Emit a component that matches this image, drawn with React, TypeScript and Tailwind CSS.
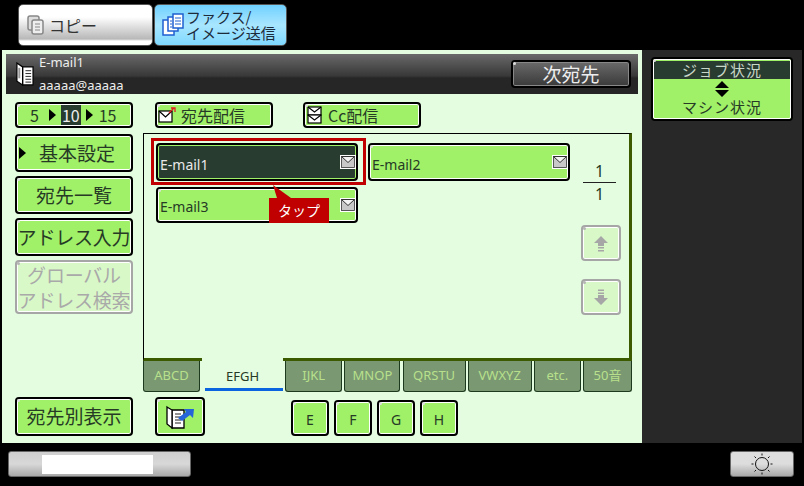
import type { ReactNode } from "react";

const font = "font-['Noto_Sans_CJK_JP','DejaVu_Sans',sans-serif]";
const latin = "font-['Noto_Sans','Noto_Sans_CJK_JP',sans-serif]";

function Dot({ muted }: { muted?: boolean }) {
  return (
    <span
      className={`absolute left-[0px] top-[0px] h-[3px] w-[3px] rounded-full ${muted ? "bg-[#b5b5b5]" : "bg-[#dddddd]"}`}
    />
  );
}

function GreenButton({ className, children }: { className: string; children: ReactNode }) {
  return (
    <div
      className={`relative flex shrink-0 items-center justify-center rounded-[4px] border-2 border-black bg-[#a0f068] text-[#263a26] shadow-[inset_0_0_0_1px_#ffffff] ${className}`}
    >
      <Dot />
      {children}
    </div>
  );
}

function DisabledButton({ className, children }: { className: string; children: ReactNode }) {
  return (
    <div
      className={`relative flex shrink-0 items-center justify-center rounded-[4px] border-2 border-[#a6a6a6] bg-[#d9f8c8] text-[#a9a9a9] shadow-[inset_0_0_0_1px_#ffffff] ${className}`}
    >
      <Dot muted />
      {children}
    </div>
  );
}

function Triangle({ className }: { className?: string }) {
  return (
    <svg width="7" height="12" viewBox="0 0 7 12" className={`shrink-0 ${className ?? ""}`}>
      <path d="M0 0 L7 6 L0 12 Z" fill="#000000" />
    </svg>
  );
}

function Envelope() {
  return (
    <svg width="16" height="14" viewBox="0 0 16 14" className="shrink-0">
      <rect x="0" y="0" width="16" height="14" fill="#ffffff" />
      <rect x="1.5" y="1.5" width="13" height="11" fill="#c8c8c8" stroke="#333333" strokeWidth="0.8" />
      <path d="M1.5 1.5 L8 7.5 L14.5 1.5 Z" fill="#f4f4f4" stroke="#333333" strokeWidth="1" />
    </svg>
  );
}

function BookIcon({ size = 20 }: { size?: number }) {
  return (
    <svg width={size} height={size + 6} viewBox="0 0 20 26" className="shrink-0">
      <path d="M8 5 H19 V24 H8 Z" fill="#ffffff" stroke="#000000" strokeWidth="1.3" />
      <path d="M2 1 L8 5 V24 L2 20 Z" fill="#ffffff" stroke="#000000" strokeWidth="1.3" />
      <path d="M11 9 H17 M11 12 H17 M11 15 H17 M11 18 H17 M11 21 H17" stroke="#222222" strokeWidth="1" />
      <path d="M4.5 6 V17" stroke="#9a9a9a" strokeWidth="2" />
    </svg>
  );
}

function MailTab({ dark, label }: { dark?: boolean; label: string }) {
  return (
    <div
      className={`relative flex h-[38px] w-[202px] shrink-0 justify-between rounded-[4px] border-2 pl-[2px] text-[14px] ${
        dark
          ? "border-black bg-[#283c30] text-[#e8e8e8] shadow-[inset_0_0_0_1px_#a0f068]"
          : "border-black bg-[#a0f068] text-[#263a26] shadow-[inset_0_0_0_1px_#ffffff]"
      }`}
    >
      {!dark && <Dot />}
      <span className={`pt-[10px] leading-[20px] ${latin}`}>{label}</span>
      <span className="pt-[10px]">
        <Envelope />
      </span>
    </div>
  );
}

const tabs = [
  { label: "ABCD", w: "w-[57px]" },
  { label: "EFGH", w: "w-[81px]", active: true },
  { label: "IJKL", w: "w-[57px]" },
  { label: "MNOP", w: "w-[56px]" },
  { label: "QRSTU", w: "w-[63px]" },
  { label: "VWXYZ", w: "w-[64px]" },
  { label: "etc.", w: "w-[47px]" },
  { label: "50音", w: "w-[49px]" },
];

export default function App() {
  return (
    <div className={`flex h-[486px] w-[804px] flex-col overflow-hidden bg-black ${font}`}>
      {/* top mode tabs */}
      <div className="flex h-[50px] shrink-0 pl-[18px] pt-[4px]">
        <div className="flex h-[42px] w-[135px] items-center rounded-[5px] border border-[#555555] bg-gradient-to-b from-[#ffffff] from-30% via-[#b8b8b8] via-85% to-[#ffffff] to-90% pl-[8px] text-[16px] text-[#333333]">
          <svg width="18" height="22" viewBox="0 0 18 22" className="shrink-0">
            <rect x="1" y="2" width="11" height="14" rx="2" fill="#dddddd" stroke="#888888" strokeWidth="1.5" />
            <rect x="5" y="6" width="11" height="14" rx="2" fill="#eeeeee" stroke="#888888" strokeWidth="1.5" />
            <path d="M8 10 H13 M8 13 H13 M8 16 H13" stroke="#888888" strokeWidth="1" />
          </svg>
          <span className="ml-[4px]">コピー</span>
        </div>
        <div className="ml-[1px] flex h-[42px] w-[133px] items-center rounded-[5px] border border-[#555555] bg-gradient-to-b from-[#6fd0ff] via-[#a8e6ff] to-[#7fd8ff] pl-[7px] text-[15px] leading-[16px] text-[#1c2a3a]">
          <svg width="22" height="24" viewBox="0 0 22 24" className="shrink-0">
            <rect x="1" y="7" width="11" height="15" fill="#ffffff" stroke="#1f5fd0" strokeWidth="1.5" />
            <rect x="6" y="4" width="10" height="14" fill="#ffffff" stroke="#1f5fd0" strokeWidth="1.5" />
            <rect x="11" y="1" width="10" height="14" fill="#ffffff" stroke="#1f5fd0" strokeWidth="1.5" />
            <path d="M13 5 H19 M13 8 H19 M13 11 H19 M8 8 H10 M8 11 H10 M8 14 H10" stroke="#1f5fd0" strokeWidth="1" />
          </svg>
          <div className="ml-[2px]">
            <div>ファクス/</div>
            <div>イメージ送信</div>
          </div>
        </div>
      </div>

      {/* main area */}
      <div className="ml-[2px] flex h-[393px] w-[800px] shrink-0">
        <div className="h-full w-[640px] shrink-0 bg-[#e4fde0] pt-[4px]">
          {/* destination header */}
          <div className="ml-[4px] flex h-[40px] w-[632px] items-center bg-gradient-to-b from-[#6a6a6a] from-0% via-[#383838] via-55% to-[#262626] to-60% pl-[9px] pr-[7px]">
            <BookIcon size={19} />
            <div className={`ml-[5px] flex-1 text-[13px] leading-[23px] text-[#eeeeee] ${latin}`}>
              <div>E-mail1</div>
              <div>aaaaa@aaaaa</div>
            </div>
            <div className="relative flex h-[28px] w-[120px] items-center justify-center rounded-[4px] border-2 border-black bg-gradient-to-b from-[#6a6a6a] to-[#3a3a3a] text-[19px] text-[#eeeeee] shadow-[inset_0_0_0_1px_#888888]">
              <Dot />
              次宛先
            </div>
          </div>

          {/* delivery options */}
          <div className="mt-[8px] flex pl-[13px] text-[16px]">
            <GreenButton className="h-[26px] w-[118px] justify-start pl-[13px] text-[16px]">
              <span>5</span>
              <Triangle className="ml-[10px]" />
              <span className="ml-[5px] bg-[#283c30] px-[1px] leading-[20px] text-[#eeeeee]">10</span>
              <Triangle className="ml-[5px]" />
              <span className="ml-[6px]">15</span>
            </GreenButton>
            <GreenButton className="ml-[22px] h-[26px] w-[118px] justify-start pl-[1px]">
              <svg width="18" height="16" viewBox="0 0 18 16" className="shrink-0">
                <rect x="1" y="4" width="13" height="11" fill="#ffffff" stroke="#000000" strokeWidth="1.2" />
                <path d="M1 4 L7.5 10 L14 4" fill="none" stroke="#000000" strokeWidth="1.2" />
                <path d="M11 6 L16 1 M13 1 H17 V5" fill="none" stroke="#e02020" strokeWidth="1.3" />
              </svg>
              <span className="ml-[5px]">宛先配信</span>
            </GreenButton>
            <GreenButton className="ml-[30px] h-[26px] w-[118px] justify-start pl-[1px]">
              <svg width="18" height="18" viewBox="0 0 18 18" className="shrink-0">
                <rect x="2" y="1" width="13" height="8" fill="#ffffff" stroke="#000000" strokeWidth="1.2" />
                <path d="M2 1 L8.5 6 L15 1" fill="none" stroke="#000000" strokeWidth="1.1" />
                <rect x="2" y="9" width="13" height="8" fill="#ffffff" stroke="#000000" strokeWidth="1.2" />
                <path d="M2 9 L8.5 14 L15 9" fill="none" stroke="#000000" strokeWidth="1.1" />
              </svg>
              <span className="ml-[4px]">Cc配信</span>
            </GreenButton>
          </div>

          {/* left menu and list */}
          <div className="mt-[5px] flex pl-[13px]">
            <div className="flex w-[118px] shrink-0 flex-col gap-[4px] pt-[1px]">
              <GreenButton className="h-[38px] w-[118px] text-[19px]">
                <Triangle className="absolute left-[2px]" />
                <span className="ml-[6px]">基本設定</span>
              </GreenButton>
              <GreenButton className="h-[38px] w-[118px] text-[19px]">宛先一覧</GreenButton>
              <GreenButton className="h-[38px] w-[118px] whitespace-nowrap text-[19px] tracking-[-0.2px]">
                アドレス入力
              </GreenButton>
              <DisabledButton className="h-[54px] w-[118px] whitespace-nowrap text-center text-[19px] leading-[25px] tracking-[-0.2px]">
                <div>
                  グローバル
                  <br />
                  アドレス検索
                </div>
              </DisabledButton>
            </div>

            <div className="ml-[10px] w-[489px] shrink-0">
              <div className="relative flex h-[228px] border-b-[3px] border-l border-r-[3px] border-t border-b-[#3c5a00] border-l-black border-r-[#3c5a00] border-t-black pl-[12px] pt-[9px]">
                <div className="flex w-[414px] shrink-0 flex-col gap-[6px]">
                  <div className="flex h-[38px] gap-[10px]">
                    <MailTab dark label="E-mail1" />
                    <MailTab label="E-mail2" />
                  </div>
                  <div className="relative flex h-[36px] w-[202px] justify-between rounded-[4px] border-2 border-black bg-[#a0f068] pl-[2px] text-[14px] text-[#263a26] shadow-[inset_0_0_0_1px_#ffffff]">
                    <Dot />
                    <span className={`pt-[8px] leading-[20px] ${latin}`}>E-mail3</span>
                    <span className="pt-[9px]">
                      <Envelope />
                    </span>
                  </div>
                </div>

                <div className={`ml-[13px] flex w-[33px] shrink-0 flex-col items-center pt-[18px] text-[16px] leading-[20px] text-[#263a26] ${latin}`}>
                  <div>1</div>
                  <div className="my-[1px] h-px w-[33px] bg-[#222222]" />
                  <div>1</div>
                </div>

                <div className="ml-[-35px] mt-[82px] flex flex-col gap-[18px]">
                  <DisabledButton className="h-[36px] w-[40px]">
                    <svg width="16" height="17" viewBox="0 0 16 17">
                      <path d="M8 1 L15 8 H11 V11 H5 V8 H1 Z M5 12 H11 V13.5 H5 Z M5 15 H11 V16.5 H5 Z" fill="#a6a6a6" />
                    </svg>
                  </DisabledButton>
                  <DisabledButton className="h-[36px] w-[40px]">
                    <svg width="16" height="17" viewBox="0 0 16 17">
                      <path d="M8 16 L15 9 H11 V6 H5 V9 H1 Z M5 3.5 H11 V5 H5 Z M5 0.5 H11 V2 H5 Z" fill="#a6a6a6" />
                    </svg>
                  </DisabledButton>
                </div>

                {/* tutorial highlight */}
                <div className="absolute left-[7px] top-[4px] h-[47px] w-[215px] border-[3px] border-[#c00000]" />
                <div className="absolute left-[125px] top-[64px] flex h-[25px] w-[60px] items-center justify-center bg-[#c00000] text-[14px] text-white">
                  タップ
                </div>
                <svg width="20" height="14" viewBox="0 0 20 14" className="absolute left-[129px] top-[51px]">
                  <path d="M0 0 L18 13 H4 Z" fill="#c00000" />
                </svg>
              </div>

              {/* index tabs */}
              <div className={`flex justify-between text-[13px] ${latin}`}>
                {tabs.map((tab) =>
                  tab.active ? (
                    <div
                      key={tab.label}
                      className={`relative z-10 -mt-[3px] flex h-[34px] items-center justify-center bg-[#e4fde0] pt-[4px] text-[#263a26] ${tab.w}`}
                    >
                      <span>{tab.label}</span>
                      <span className="absolute bottom-[1px] left-[3px] right-[0px] h-[3px] bg-[#0a64e0]" />
                    </div>
                  ) : (
                    <div
                      key={tab.label}
                      className={`flex h-[31px] items-center justify-center rounded-b-[3px] border border-t-0 border-[#1e3a1e] bg-[#7a9872] text-[#b8e08c] ${tab.w}`}
                    >
                      <span>{tab.label}</span>
                    </div>
                  ),
                )}
              </div>
            </div>
          </div>

          {/* bottom row */}
          <div className="mt-[5px] flex items-end pl-[13px]">
            <GreenButton className="h-[39px] w-[118px] text-[19px]">宛先別表示</GreenButton>
            <GreenButton className="ml-[22px] h-[39px] w-[50px]">
              <svg width="32" height="28" viewBox="0 0 32 28">
                <path d="M8 7 H20 V25 H8 Z" fill="#ffffff" stroke="#000000" strokeWidth="1.3" />
                <path d="M3 4 L8 7 V25 L3 21 Z" fill="#ffffff" stroke="#000000" strokeWidth="1.3" />
                <path d="M11 11 H17 M11 14 H17 M11 17 H17 M11 20 H17" stroke="#222222" strokeWidth="1" />
                <path d="M14 15 L22 9 L20 6 H30 L29 15 L26 12 L18 18 Z" fill="#2464d8" />
              </svg>
            </GreenButton>
            <div className={`ml-[86px] flex gap-[5px] text-[14px] ${latin}`}>
              {["E", "F", "G", "H"].map((letter) => (
                <GreenButton key={letter} className="h-[36px] w-[38px] pt-[2px]">
                  {letter}
                </GreenButton>
              ))}
            </div>
          </div>
        </div>

        {/* status panel */}
        <div className="h-full w-[160px] shrink-0 bg-[#282828] pl-[9px] pt-[7px]">
          <div className="relative flex h-[64px] w-[142px] flex-col overflow-hidden rounded-[4px] border-2 border-black bg-[#a0f068] text-center text-[15px] text-[#263a26] outline-1 -outline-offset-3 outline-white">
            <Dot />
            <div className="mx-[1px] mt-[2px] h-[18px] bg-[#283c30] leading-[18px] tracking-[1px] text-[#c8d8c8]">
              ジョブ状況
            </div>
            <svg width="16" height="16" viewBox="0 0 16 16" className="mx-auto mt-[2px]">
              <path d="M8 0 L15 7 H1 Z M1 9 H15 L8 16 Z" fill="#000000" />
            </svg>
            <div className="leading-[20px] tracking-[1px]">マシン状況</div>
          </div>
        </div>
      </div>

      {/* bottom bar */}
      <div className="flex items-start justify-between pl-[8px] pr-[10px] pt-[8px]">
        <div className="flex h-[26px] w-[183px] rounded-[3px] border border-[#666666] bg-gradient-to-b from-[#cfcfcf] via-[#d8d8d8] to-[#a8a8a8] pl-[33px] pt-[3px]">
          <div className="h-[19px] w-[111px] bg-white" />
        </div>
        <div className="flex h-[26px] w-[64px] items-center justify-center rounded-[3px] border border-[#666666] bg-gradient-to-b from-[#dddddd] via-[#dddddd] to-[#a8a8a8]">
          <svg width="22" height="22" viewBox="0 0 22 22" fill="none" stroke="#111111" strokeWidth="1">
            <circle cx="11" cy="11" r="6.5" />
            <path d="M11 0.5 V2.5 M11 19.5 V21.5 M0.5 11 H2.5 M19.5 11 H21.5 M3.5 3.5 L5 5 M17 17 L18.5 18.5 M18.5 3.5 L17 5 M5 17 L3.5 18.5" />
          </svg>
        </div>
      </div>
    </div>
  );
}
